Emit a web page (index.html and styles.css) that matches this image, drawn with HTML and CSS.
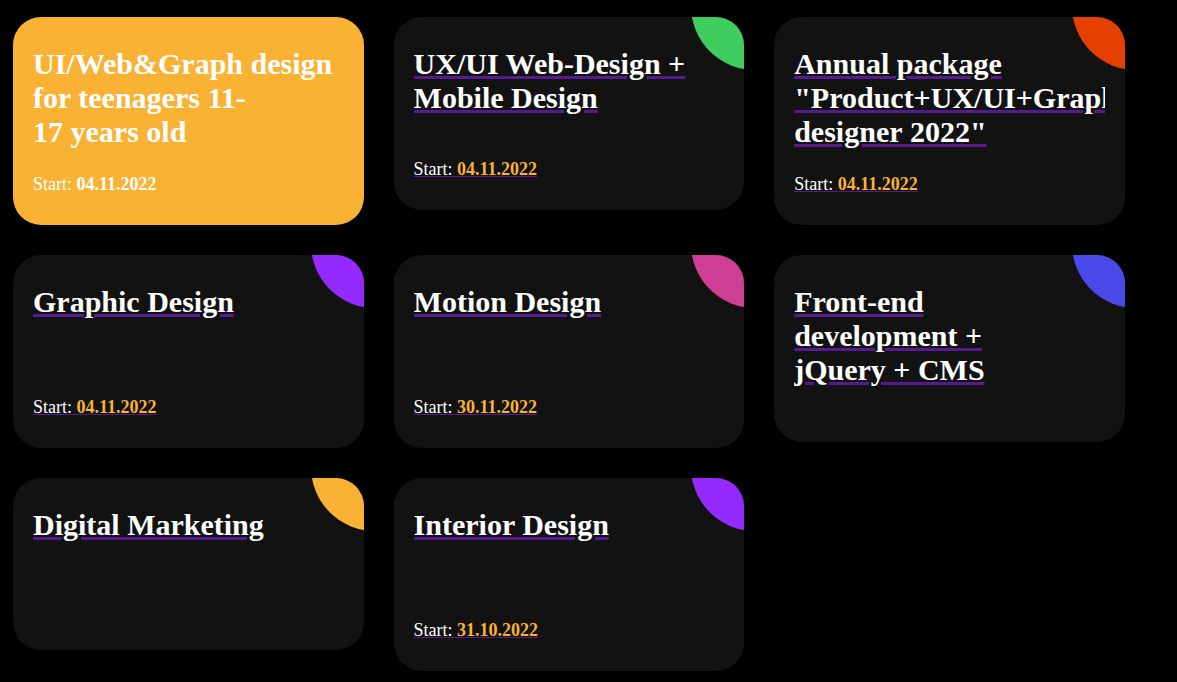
FILE: index.html
```html
<!DOCTYPE html>
<html lang="en">
<head>
<meta charset="utf-8">
<title>Courses</title>
<link rel="stylesheet" href="styles.css">
</head>
<body>
<div class="courses">
  <div class="item item-1 is-active">
    <a href="#" class="item-link">
      <div class="item-bg"></div>
      <div class="item-title">UI/Web&amp;Graph design for teenagers 11-17&nbsp;years old</div>
      <div class="item-date-box">Start: <span class="item-date">04.11.2022</span></div>
    </a>
  </div>
  <div class="item item-2">
    <a href="#" class="item-link">
      <div class="item-bg"></div>
      <div class="item-title">UX/UI Web-Design&nbsp;+ Mobile Design</div>
      <div class="item-date-box">Start: <span class="item-date">04.11.2022</span></div>
    </a>
  </div>
  <div class="item item-3">
    <a href="#" class="item-link">
      <div class="item-bg"></div>
      <div class="item-title">Annual package "Product+UX/UI+Graph designer&nbsp;2022"</div>
      <div class="item-date-box">Start: <span class="item-date">04.11.2022</span></div>
    </a>
  </div>
  <div class="item item-4">
    <a href="#" class="item-link">
      <div class="item-bg"></div>
      <div class="item-title">Graphic Design</div>
      <div class="item-date-box">Start: <span class="item-date">04.11.2022</span></div>
    </a>
  </div>
  <div class="item item-5">
    <a href="#" class="item-link">
      <div class="item-bg"></div>
      <div class="item-title">Motion Design</div>
      <div class="item-date-box">Start: <span class="item-date">30.11.2022</span></div>
    </a>
  </div>
  <div class="item item-6">
    <a href="#" class="item-link">
      <div class="item-bg"></div>
      <div class="item-title">Front-end development&nbsp;+ jQuery&nbsp;+ CMS</div>
    </a>
  </div>
  <div class="item item-7">
    <a href="#" class="item-link">
      <div class="item-bg"></div>
      <div class="item-title">Digital Marketing</div>
    </a>
  </div>
  <div class="item item-8">
    <a href="#" class="item-link">
      <div class="item-bg"></div>
      <div class="item-title">Interior Design</div>
      <div class="item-date-box">Start: <span class="item-date">31.10.2022</span></div>
    </a>
  </div>
</div>
</body>
</html>
```
FILE: styles.css
```css
html, body {
  margin: 0;
  padding: 0;
  background: #000;
}

body {
  font-family: "Liberation Serif", "Times New Roman", serif;
}

.courses {
  display: flex;
  flex-wrap: wrap;
  align-items: flex-start;
  gap: 30px;
  padding: 17px 0 0 13px;
  width: 1142px;
  box-sizing: border-box;
}

.item {
  width: 350.6px;
  border-radius: 28px;
  overflow: hidden;
}

.item-link {
  display: block;
  position: relative;
  padding: 30px 20px;
  background: #121212;
  color: #551a8b;
  text-decoration: underline;
  overflow: hidden;
}

.item-bg {
  position: absolute;
  top: -75px;
  right: -75px;
  width: 128px;
  height: 128px;
  border-radius: 50%;
  background: #f9b234;
  z-index: 1;
}

.item-title {
  position: relative;
  z-index: 2;
  min-height: 87px;
  margin: 0 0 25px;
  overflow: hidden;
  font-weight: bold;
  font-size: 30px;
  color: #fff;
}

.item-date-box {
  position: relative;
  z-index: 2;
  font-size: 18px;
  color: #fff;
}

.item-date {
  font-weight: bold;
  color: #f9b234;
}

.item-2 .item-bg { background: #3ecd5e; }
.item-3 .item-bg { background: #e44002; }
.item-4 .item-bg { background: #952aff; }
.item-5 .item-bg { background: #cd3e94; }
.item-6 .item-bg { background: #4c49ea; }
.item-7 .item-bg { background: #f9b234; }
.item-8 .item-bg { background: #952aff; }

.is-active .item-link {
  background: #f9b234;
  text-decoration: none;
}

.is-active .item-bg {
  display: none;
}

.is-active .item-date {
  color: #fff;
}
```
